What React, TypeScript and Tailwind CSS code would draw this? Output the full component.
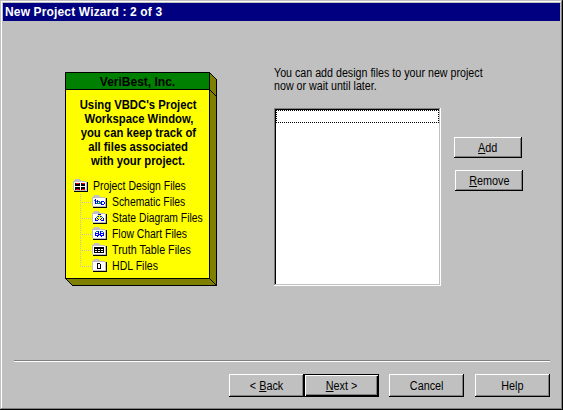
import type { ReactNode } from "react";

const FONT = "font-['Liberation_Sans',Arial,sans-serif]";

function Button({ className, primary, children }: { className: string; primary?: boolean; children: ReactNode }) {
  return (
    <button
      className={`flex items-center justify-center whitespace-pre bg-[#c0c0c0] text-[12px] leading-none ${
        primary
          ? "border border-black shadow-[inset_1px_1px_#fff,inset_-1px_-1px_#000,inset_-2px_-2px_#808080]"
          : "shadow-[inset_-1px_-1px_#000,inset_1px_1px_#fff,inset_-2px_-2px_#808080]"
      } ${className}`}
    >
      <span className="inline-block scale-x-[0.9]">{children}</span>
    </button>
  );
}

function Key({ children }: { children: string }) {
  return <span className="underline decoration-1 underline-offset-[1px]">{children}</span>;
}

function Folder({ children }: { children: ReactNode }) {
  return (
    <svg width="15" height="13" viewBox="0 0 15 13" shapeRendering="crispEdges" className="mt-[2px] shrink-0 self-start">
      <path d="M2 0h5v1h1v1h5v1h1v9H1v-1H0V2h1V1h1z" fill="#c0c0c0" />
      <path d="M1 3h12v8H1z" fill="#fff" />
      <path d="M14 3h1v10H1v-1h13z" fill="#000" />
      {children}
    </svg>
  );
}

const branches: { label: string; scale: string; glyph: ReactNode }[] = [
  {
    label: "Schematic Files",
    scale: "scale-x-[0.865]",
    glyph: (
      <>
        <path d="M2 5h2v1H2zM3 8h6v1H3zM4 6h4v1H4zM7 7h2v1H7z" fill="#008080" />
        <path d="M3 4h1v5H3zM5 5h1v3H5zM9 6h3v1H9zM9 9h3v1H9zM9 7h1v2H9zM12 7h1v2h-1z" fill="#00f" />
      </>
    ),
  },
  {
    label: "State Diagram Files",
    scale: "scale-x-[0.86]",
    glyph: (
      <>
        <path d="M6 4h3v4H6zM4 7h2v2H4zM9 7h2v2H9z" fill="#ff0" />
        <path d="M5 5h1v1H5zM9 5h1v1H9zM4 6h1v1H4zM10 6h1v1h-1z" fill="#008080" />
        <path d="M6 3h3v1H6zM6 5h1v1H6zM8 5h1v1H8zM3 7h1v2H3zM11 7h1v2h-1zM3 9h3v1H3zM9 9h3v1H9zM6 8h1v1H6zM8 8h1v1H8zM5 7h1v1H5zM9 7h1v1H9z" fill="#00f" />
      </>
    ),
  },
  {
    label: "Flow Chart Files",
    scale: "scale-x-[0.865]",
    glyph: (
      <>
        <path d="M4 4h2v1H4zM9 4h2v1H9zM3 5h1v1H3zM11 5h1v1h-1z" fill="#008080" />
        <path d="M6 4h1v2H6zM8 4h1v2H8zM3 6h4v1H3zM8 6h4v1H8zM3 7h1v1H3zM6 7h1v1H6zM8 7h1v1H8zM11 7h1v1h-1zM3 8h4v1H3zM8 8h4v1H8zM5 9h1v1H5zM9 9h1v1H9zM7 7h1v1H7z" fill="#00f" />
      </>
    ),
  },
  {
    label: "Truth Table Files",
    scale: "scale-x-[0.895]",
    glyph: <path d="M2 4h10v6H2zM3 6v1h2V6zM6 6v1h2V6zM9 6v1h2V6zM3 8v1h2V8zM6 8v1h2V8zM9 8v1h2V8z" fill="#000" fillRule="evenodd" />,
  },
  {
    label: "HDL Files",
    scale: "scale-x-[0.88]",
    glyph: <path d="M5 4h3v1h1v5H5zM6 5v4h2V5z" fill="#000" fillRule="evenodd" />,
  },
];

const blurb = ["Using VBDC's Project", "Workspace Window,", "you can keep track of", "all files associated", "with your project."];

function Card() {
  return (
    <div className="relative h-[214px] w-[152px]">
      <svg width="152" height="214" viewBox="0 0 152 214" shapeRendering="crispEdges" className="absolute inset-0">
        <path d="M144.500 .5l7 7v206h-144l-7-7z" fill="#808000" stroke="#000" />
        <path d="M144.500 17.500l7 7" stroke="#000" />
        <path d="M144.500 206.500l7 7" stroke="#000" />
        <path d="M.5 .5h144v206H.5z" fill="#ff0" stroke="#000" />
        <path d="M1 1h143v16H1z" fill="#008000" />
        <path d="M0 17.500h145" stroke="#000" />
      </svg>
      <div className="relative flex w-[145px] flex-col">
        <div className="flex h-[18px] items-center justify-center pt-[2px] text-[12px] font-bold">VeriBest, Inc.</div>
        <div className="mt-[8px] flex flex-col items-center pl-[2px] text-[12px] font-bold leading-[14px]">
          {blurb.map((line) => (
            <span key={line} className="scale-x-[0.94] whitespace-nowrap">{line}</span>
          ))}
        </div>
        <div className="mt-[9px] flex flex-col pl-[8px] text-[12px]">
          <div className="flex h-[16px] items-center">
            <Folder>
              <path d="M2 4h5v3H2zM8 4h4v3H8zM2 8h5v3H2zM8 8h4v3H8z" fill="#000" />
              <path d="M3 4h3v1H3zM9 4h3v1H9zM3 10h3v1H3zM9 10h3v1H9z" fill="#f00" />
            </Folder>
            <span className="ml-[5px] origin-left scale-x-[0.87] whitespace-nowrap pt-[2px] leading-[18px]">Project Design Files</span>
          </div>
          {branches.map((b, i) => (
            <div key={b.label} className="flex h-[16px] items-center pl-[7px]">
              <svg width="12" height="16" className="shrink-0" shapeRendering="crispEdges">
                <path d={i === 4 ? "M.5 1V10" : "M.5 1V16"} stroke="#c0c0c0" strokeDasharray="1 1" />
                <path d="M0 9.500H12" stroke="#c0c0c0" strokeDasharray="1 1" />
              </svg>
              <Folder>{b.glyph}</Folder>
              <span className={`ml-[5px] origin-left whitespace-nowrap pt-[2px] leading-[18px] ${b.scale}`}>{b.label}</span>
            </div>
          ))}
        </div>
      </div>
    </div>
  );
}

export default function App() {
  return (
    <div className={`flex h-[410px] w-[563px] flex-col overflow-hidden bg-[#c0c0c0] p-[3px] text-black shadow-[inset_-1px_-1px_#000,inset_1px_1px_#c0c0c0,inset_-2px_-2px_#808080,inset_2px_2px_#fff] ${FONT}`}>
      <div className="flex h-[18px] shrink-0 items-center bg-[#000080] pl-[2px] text-[12px] font-bold tracking-[0.15px] text-white">
        New Project Wizard : 2 of 3
      </div>
      <div className="flex h-[339px] shrink-0 items-start">
        <div className="ml-[62px] mt-[51px]">
          <Card />
        </div>
        <div className="ml-[57px] mt-[46px] w-[168px]">
          <p className="origin-left scale-x-[0.89] whitespace-nowrap text-[12px] leading-[13px]">
            You can add design files to your new project
            <br />
            now or wait until later.
          </p>
          <div className="mt-[15px] h-[178px] w-[167px] bg-white p-[2px] shadow-[inset_-1px_-1px_#fff,inset_1px_1px_#808080,inset_-2px_-2px_#c0c0c0,inset_2px_2px_#000]">
            <div className="h-[13px] w-[163px] border border-dotted border-black" />
          </div>
        </div>
        <div className="ml-[12px] mt-[116px] flex flex-col gap-[12px]">
          <Button className="h-[21px] w-[68px]"><Key>A</Key>dd</Button>
          <Button className="ml-[1px] h-[21px] w-[68px]"><Key>R</Key>emove</Button>
        </div>
      </div>
      <div className="ml-[11px] h-[2px] w-[536px] shrink-0 border-b border-t border-b-white border-t-[#808080]" />
      <div className="ml-[226px] mt-[12px] flex">
        <Button className="h-[23px] w-[75px]">{"< "}<Key>B</Key>ack</Button>
        <Button primary className="h-[23px] w-[75px]"><Key>N</Key>{"ext >"}</Button>
        <Button className="ml-[10px] h-[23px] w-[75px]">Cancel</Button>
        <Button className="ml-[11px] h-[23px] w-[75px]">Help</Button>
      </div>
    </div>
  );
}
